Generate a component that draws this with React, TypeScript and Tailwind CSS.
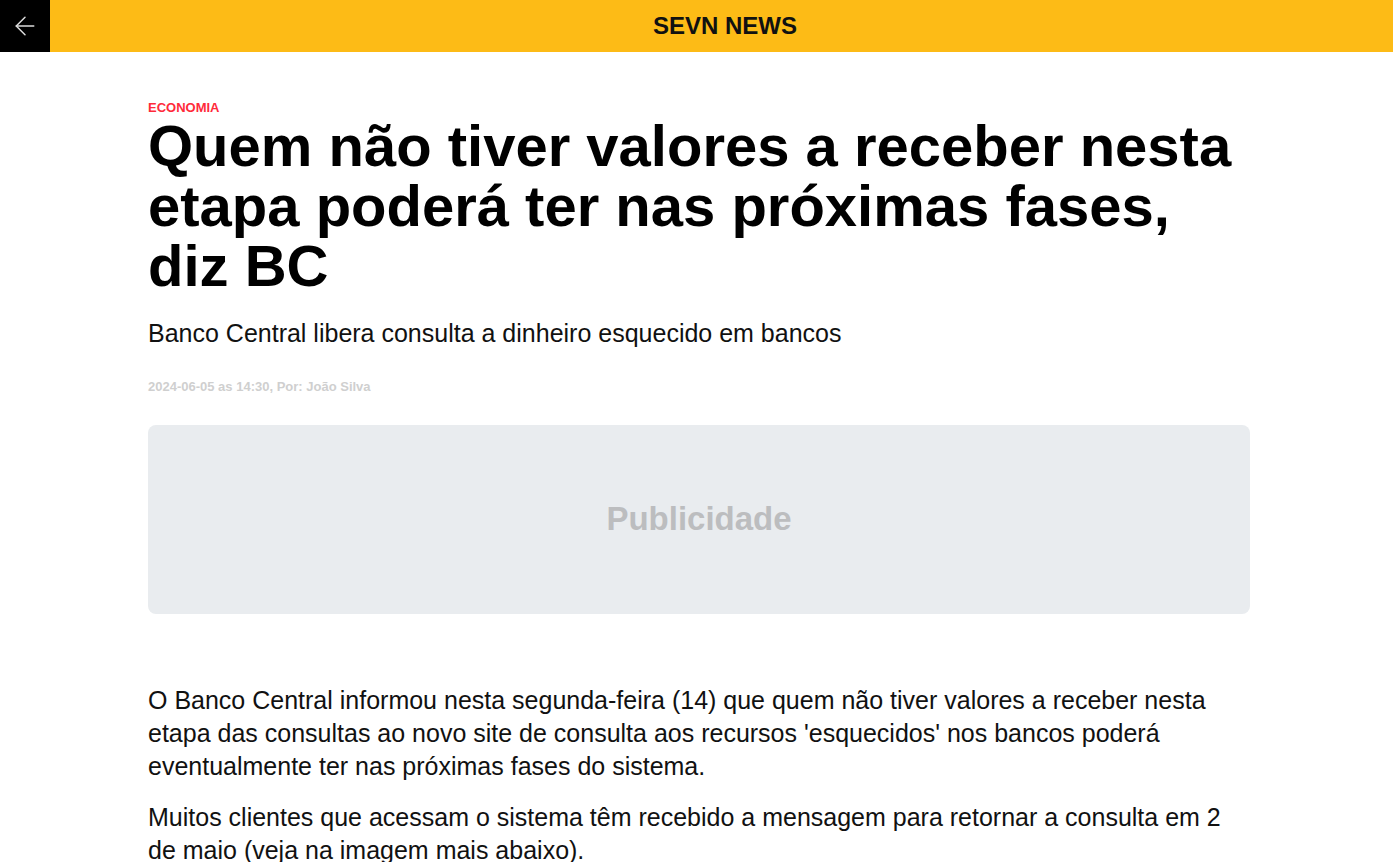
import React from "react";
import { ArrowLeft } from "lucide-react";

export default function App() {
  return (
    <div className="min-h-screen bg-white" style={{ fontFamily: '"Liberation Sans", Arial, sans-serif' }}>
      <header className="flex h-[52px]">
        <button className="flex w-[50px] items-center justify-center bg-black text-[#dcdcdc]">
          <ArrowLeft size={30} strokeWidth={1.2} />
        </button>
        <div className="flex flex-1 items-center justify-center bg-[#fdbb16] pl-[7px]">
          <h1 className="text-[24px] font-bold text-[#111]">SEVN NEWS</h1>
        </div>
      </header>
      <main className="ml-[148px] w-[1102px] pt-[50px]">
        <div className="text-[13px] font-bold leading-[11px] text-[#ff2a3a]">ECONOMIA</div>
        <h2 className="mt-[3px] text-[58px] font-bold leading-[60px] text-black">
          Quem não tiver valores a receber nesta etapa poderá ter nas próximas fases, diz BC
        </h2>
        <p className="mt-[19px] text-[25px] leading-[36px] text-[#111]">
          Banco Central libera consulta a dinheiro esquecido em bancos
        </p>
        <div className="mt-[28px] text-[13px] font-bold leading-[15px] text-[#cfcfcf]">
          2024-06-05 as 14:30, Por: João Silva
        </div>
        <div className="mt-[31px] flex h-[189px] items-center justify-center rounded-[8px] bg-[#e9ecef] pb-[2px]">
          <span className="text-[33px] font-bold text-[#bcbdbf]">Publicidade</span>
        </div>
        <div className="mt-[70px] text-[25px] leading-[33px] text-[#111]">
          <p>
            O Banco Central informou nesta segunda-feira (14) que quem não tiver valores a receber nesta etapa das consultas ao novo site de consulta aos recursos 'esquecidos' nos bancos poderá eventualmente ter nas próximas fases do sistema.
          </p>
          <p className="mt-[18px]">
            Muitos clientes que acessam o sistema têm recebido a mensagem para retornar a consulta em 2 de maio (veja na imagem mais abaixo).
          </p>
        </div>
      </main>
    </div>
  );
}
